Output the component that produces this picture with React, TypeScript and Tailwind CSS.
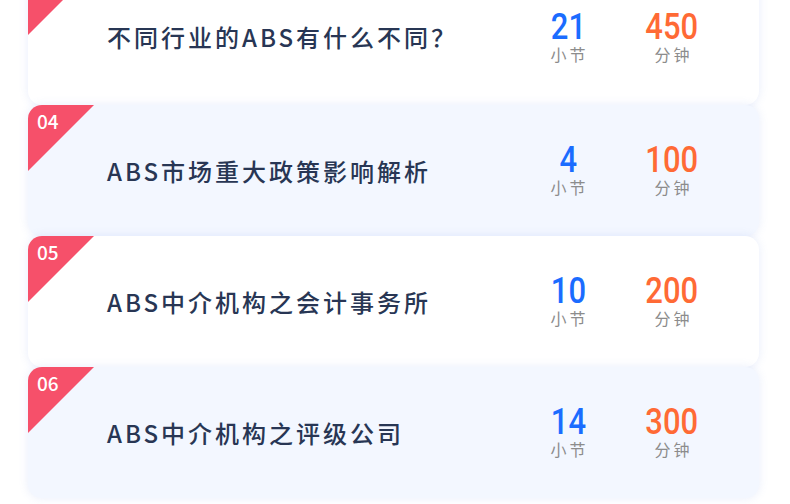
const courses = [
  { no: "03", title: "不同行业的ABS有什么不同？", sections: 21, minutes: 450 },
  { no: "04", title: "ABS市场重大政策影响解析", sections: 4, minutes: 100 },
  { no: "05", title: "ABS中介机构之会计事务所", sections: 10, minutes: 200 },
  { no: "06", title: "ABS中介机构之评级公司", sections: 14, minutes: 300 },
];

function Stat({ value, label, color }: { value: number; label: string; color: string }) {
  return (
    <div className="w-[80px] flex flex-col items-center">
      <span
        className={`inline-block scale-x-[0.86] text-[36px] leading-[32px] font-medium ${color}`}
        style={{ fontFamily: "Roboto, 'Liberation Sans', sans-serif" }}
      >
        {value}
      </span>
      <span className="mt-[1px] pl-[3px] text-[16px] leading-[20px] tracking-[3px] text-[#8c8c8c]">{label}</span>
    </div>
  );
}

export default function App() {
  return (
    <div
      className="w-[790px] h-[504px] overflow-hidden bg-white"
      style={{ fontFamily: "'Noto Sans CJK SC', 'Noto Sans', sans-serif" }}
    >
      <div className="-mt-[31px] pl-[28px] pr-[31px] flex flex-col">
        {courses.map((c, i) => (
          <div
            key={c.no}
            className={`relative rounded-[14px] overflow-hidden flex items-center shadow-[0_0_10px_rgba(110,140,230,0.16)] ${
              i === 0 ? "h-[136px]" : "h-[131px]"
            } ${i % 2 === 1 ? "bg-[#f3f7ff]" : "bg-white"}`}
          >
            <div className="absolute left-0 top-0 w-[66px] h-[66px] bg-[#f6506a] [clip-path:polygon(0_0,100%_0,0_100%)]" />
            <span className="absolute left-[9px] top-[3px] text-[19px] leading-[26px] font-medium text-white">
              {c.no}
            </span>
            <div className="flex-1 pl-[79px] text-[24px] font-medium tracking-[3px] text-[#283654]">{c.title}</div>
            <div className="flex gap-[24px] pr-[47px]">
              <Stat value={c.sections} label="小节" color="text-[#1b6cff]" />
              <Stat value={c.minutes} label="分钟" color="text-[#ff6a35]" />
            </div>
          </div>
        ))}
      </div>
    </div>
  );
}
